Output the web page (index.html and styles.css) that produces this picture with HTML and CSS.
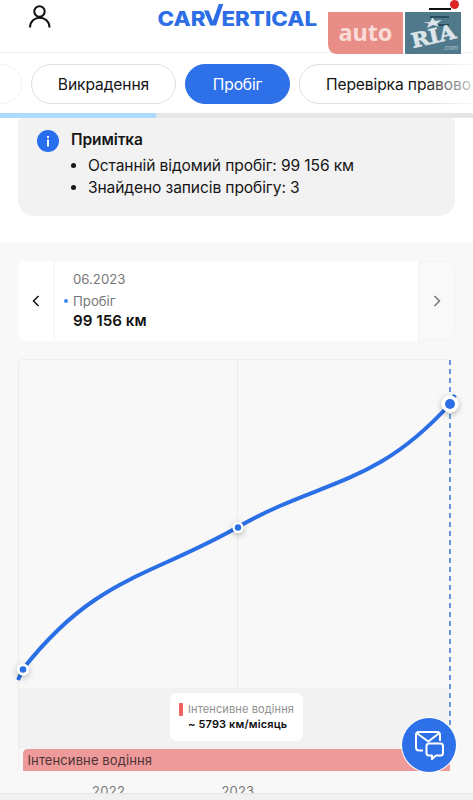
FILE: index.html
```html
<!DOCTYPE html>
<html lang="uk">
<head>
<meta charset="utf-8">
<meta name="viewport" content="width=device-width, initial-scale=1">
<title>carVertical</title>
<link rel="stylesheet" href="styles.css">
</head>
<body>
<div class="app">
  <header class="header">
    <svg class="user" width="24" height="26" viewBox="0 0 24 26"><circle cx="11.5" cy="7.5" r="5.2"/><path d="M2 23.500C2 10.500 21.500 10.500 21.500 23.500"/></svg>
    <svg class="logo" width="162" height="30" viewBox="0 0 162 30">
      <text x="0.5" y="25.500" textLength="48" lengthAdjust="spacingAndGlyphs">CAR</text>
      <path d="M47 10.500h4.600l4.200 10.500L61.800 4h4.500l-7.200 21.500h-5.800z"/>
      <text x="64.500" y="25.500" textLength="95.500" lengthAdjust="spacingAndGlyphs">ERTICAL</text>
    </svg>
    <div class="menu"><i></i><i></i><i></i></div>
    <div class="watermark">
      <svg width="133" height="42" viewBox="0 0 133 42">
        <path class="wm-red" d="M0 0H75V42H10Q0 42 0 32z"/>
        <rect class="wm-blue" x="77" width="56" height="42"/>
        <path class="wm-bars" d="M102 5H121M108 13H121"/>
        <text class="wm-auto" x="10.500" y="28.500" textLength="54" lengthAdjust="spacingAndGlyphs">auto</text>
        <path class="wm-star" d="M95 10.500l7-.5 2.500-4.500 2.500 3.500 7-1-5 3.500 2 3-6-1.500-6 3 2-4.500z"/>
        <text class="wm-ria" x="0" y="0" transform="translate(85 36) rotate(-13)" textLength="45" lengthAdjust="spacingAndGlyphs">RIA</text>
        <text class="wm-com" x="115" y="38" textLength="15" lengthAdjust="spacingAndGlyphs">.com</text>
      </svg>
    </div>
    <span class="alert"></span>
  </header>
  <nav class="tabs">
    <span class="tab tab-prev"></span>
    <span class="tab tab-theft">Викрадення</span>
    <span class="tab tab-active">Пробіг</span>
    <span class="tab tab-legal">Перевірка правово</span>
  </nav>
  <div class="progress"><div class="progress-value"></div></div>
  <section class="summary">
    <div class="note">
      <svg class="info" width="22" height="22" viewBox="0 0 22 22"><circle cx="11" cy="11" r="11"/><path d="M11 9.500V16.500M11 6v2"/></svg>
      <div class="note-body">
        <h3>Примітка</h3>
        <ul><li><span>Останній відомий пробіг: 99 156 км</span></li><li><span>Знайдено записів пробігу: 3</span></li></ul>
      </div>
    </div>
  </section>
  <main class="mileage">
    <div class="record">
      <div class="prev"><svg width="10" height="14" viewBox="0 0 10 14"><path d="M7.500 2L2.500 7l5 5"/></svg></div>
      <div class="record-body">
        <div class="date">06.2023</div>
        <div class="label">Пробіг</div>
        <div class="value">99 156 км</div>
      </div>
      <div class="next"><svg width="10" height="14" viewBox="0 0 10 14"><path d="M2.500 2l5 5-5 5"/></svg></div>
    </div>
    <div class="chart">
      <svg class="plot" width="473" height="434" viewBox="0 359 473 434">
        <defs><filter id="shadow" x="-100%" y="-100%" width="300%" height="300%"><feDropShadow dx="0" dy="2" stdDeviation="3" flood-color="#000" flood-opacity=".3"/></filter></defs>
        <path class="grid" d="M18.500 770V364Q18.500 359.500 23 359.500H450M237.500 360V688"/>
        <rect class="band" x="19" y="688" width="431" height="61"/>
        <path class="cursor" d="M450 360V750"/>
        <path class="bar" d="M23 771V754q0-5 5-5H450v22z"/>
        <text class="bar-label" x="27.500" y="764.500" textLength="124.500">Інтенсивне водіння</text>
        <path class="line" d="M18 680L23 669C95 577 150 577 238 527C322 479 375 487 450 404L455 395"/>
        <g filter="url(#shadow)"><circle class="halo" cx="23" cy="669.500" r="6"/><circle class="halo" cx="238" cy="527.500" r="5.500"/><circle class="halo" cx="450" cy="404" r="8.500"/></g>
        <circle class="dot" cx="23" cy="669.500" r="3.300"/><circle class="dot" cx="238" cy="527.500" r="3.200"/><circle class="dot" cx="450" cy="404" r="5"/>
        <text class="year" x="92" y="795.500" textLength="33">2022</text>
        <text class="year" x="221.500" y="795.500" textLength="32.500">2023</text>
      </svg>
      <div class="tooltip">
        <i class="mark"></i>
        <div><div class="tip-label">Інтенсивне водіння</div><div class="tip-value">~ 5793 км/місяць</div></div>
      </div>
      <div class="chat">
        <svg width="54" height="54" viewBox="0 0 54 54"><path d="M21 32.500H17q-3 0-3-3V17q0-3 3-3H35q3 0 3 3v6M14.500 15L26.300 23.500 37.500 15"/><path class="bubble" d="M27 25.500H38.500q2.500 0 2.500 2.500v7q0 2.500-2.500 2.500H34L30 41V37.500H27q-2.500 0-2.500-2.500V28q0-2.500 2.500-2.500z"/></svg>
      </div>
    </div>
  </main>
  <footer class="bottom"></footer>
</div>
</body>
</html>
```

FILE: styles.css
```css
* { box-sizing: border-box; }
body { margin: 0; background: #fff; color: #161616; font-family: Inter, "Noto Sans", sans-serif; }
.app { width: 473px; height: 800px; overflow: hidden; display: flex; flex-direction: column; }

.header { position: relative; height: 53px; flex: none; border-bottom: 1px solid #f0f0f0; display: flex; align-items: flex-start; }
.user { margin: 4px 0 0 28px; fill: none; stroke: #111; stroke-width: 2; }
.logo { margin-left: 105px; fill: #2d6de5; }
.logo text { font-weight: 800; font-size: 20.5px; }
.menu { margin: 8px 0 0 110px; width: 22px; display: grid; gap: 6px; }
.menu i { height: 2px; background: #111; }
.watermark { position: absolute; left: 328px; top: 12px; height: 42px; z-index: 2; }
.watermark svg { display: block; }
.wm-red { fill: #e88e86; }
.wm-blue { fill: #50798c; }
.wm-bars { stroke: #294e60; stroke-width: 2; }
.wm-auto { font: 700 23px "Noto Sans", sans-serif; fill: #f9dcd8; }
.wm-star { fill: #dce5e9; }
.wm-ria { font: 700 20px "DejaVu Serif", serif; fill: #dce5e9; stroke: #dce5e9; stroke-width: .6; }
.wm-com { font: italic 7px "Liberation Sans", sans-serif; fill: #b5c9d2; }
.alert { position: absolute; z-index: 3; left: 450px; top: 0; width: 9px; height: 9px; border-radius: 50%; background: #db2522; }

.tabs { position: relative; display: flex; gap: 9px; height: 60px; flex: none; padding-top: 11px; overflow: hidden; }
.tab { height: 40px; flex: none; border: 1.5px solid #dedede; border-radius: 20px; display: flex; align-items: center; justify-content: center; font-size: 15.6px; white-space: nowrap; }
.tab-prev { width: 52px; margin-left: -30px; border-color: #f2f2f2; }
.tab-theft { width: 145px; letter-spacing: -.1px; }
.tab-active { width: 105px; background: #2e70e8; border-color: #2e70e8; color: #fff; letter-spacing: -.15px; }
.tab-legal { width: 210px; justify-content: flex-start; padding-left: 26px; letter-spacing: -.12px; }
.tabs::after { content: ""; position: absolute; right: 0; top: 0; width: 50px; height: 60px; background: linear-gradient(90deg, #fff0, #fffc); }

.progress { height: 5px; flex: none; background: #e6e6e6; }
.progress-value { width: 156px; height: 5px; background: #aedaff; }

.summary { height: 125px; flex: none; padding: 0 18px; }
.note { height: 98px; background: #f2f2f2; border-radius: 5px 5px 16px 16px; display: flex; padding: 12px 0 0 19px; }
.info circle { fill: #286ff0; }
.info path { stroke: #fff; stroke-width: 2; }
.note-body { margin-left: 12px; font-size: 15.6px; line-height: 22px; letter-spacing: -.12px; }
.note h3 { margin: -2px 0 4px 0; font-size: 15.5px; line-height: 23px; font-weight: 600; letter-spacing: -.1px; }
.note ul { margin: 0; padding-left: 17px; }

.mileage { height: 550px; flex: none; background: #f8f8f8; padding-top: 18px; overflow: hidden; }
.record { margin: 0 18px; height: 80px; border-radius: 7px; background: #fff; display: flex; overflow: hidden; }
.prev, .next { width: 37px; display: flex; align-items: center; justify-content: center; border-right: 2px solid #f8f8f8; }
.next { background: #f9f9f9; border: 1px solid #f3f3f3; color: #777; }
.prev svg, .next svg { fill: none; stroke: #111; stroke-width: 1.5; }
.next svg { stroke: #777; }
.record-body { flex: 1; padding: 7px 0 0 18px; font-size: 13.2px; color: #777; }
.date { line-height: 22px; }
.label { position: relative; line-height: 22px; }
.label::before { content: ""; position: absolute; left: -9px; top: 9px; width: 4px; height: 4px; border-radius: 50%; background: #3d87f5; }
.value { line-height: 18px; font-size: 15.2px; font-weight: 600; color: #111; }

.chart { position: relative; margin-top: 18px; height: 434px; }
.plot { display: block; }
.grid { fill: none; stroke: #ededed; }
.band { fill: #f2f2f2; }
.bar { fill: #ef9a9a; }
.bar-label { font-size: 13px; fill: #4b3434; }
.line { fill: none; stroke: #2b6fe6; stroke-width: 4; }
.halo { fill: #fff; }
.dot { fill: #2b6fe6; }
.cursor { stroke: #3b78d8; stroke-width: 1.5; stroke-dasharray: 5 4; }
.year { font-size: 13px; fill: #777; }
.tooltip { position: absolute; left: 170px; top: 334px; width: 133px; height: 48px; border-radius: 7px; background: #fff; padding: 9px 0 0 9px; display: flex; gap: 5px; white-space: nowrap; }
.mark { width: 4px; height: 13px; margin-top: 1px; border-radius: 1px; background: #ee625f; }
.tip-label { font-size: 11px; line-height: 14px; letter-spacing: .12px; color: #909090; }
.tip-value { font-size: 11px; line-height: 17px; letter-spacing: .14px; font-weight: 600; color: #111; }
.chat { position: absolute; left: 402px; top: 359px; width: 54px; height: 54px; border-radius: 50%; background: #2e70e8; box-shadow: 0 0 0 1px #fff; }
.chat svg { display: block; fill: none; stroke: #fff; stroke-width: 2; stroke-linejoin: round; }
.bubble { fill: #2e70e8; }
.bottom { height: 7px; flex: none; background: #f1f1f1; border-top: 1px solid #e5e5e5; }
```
